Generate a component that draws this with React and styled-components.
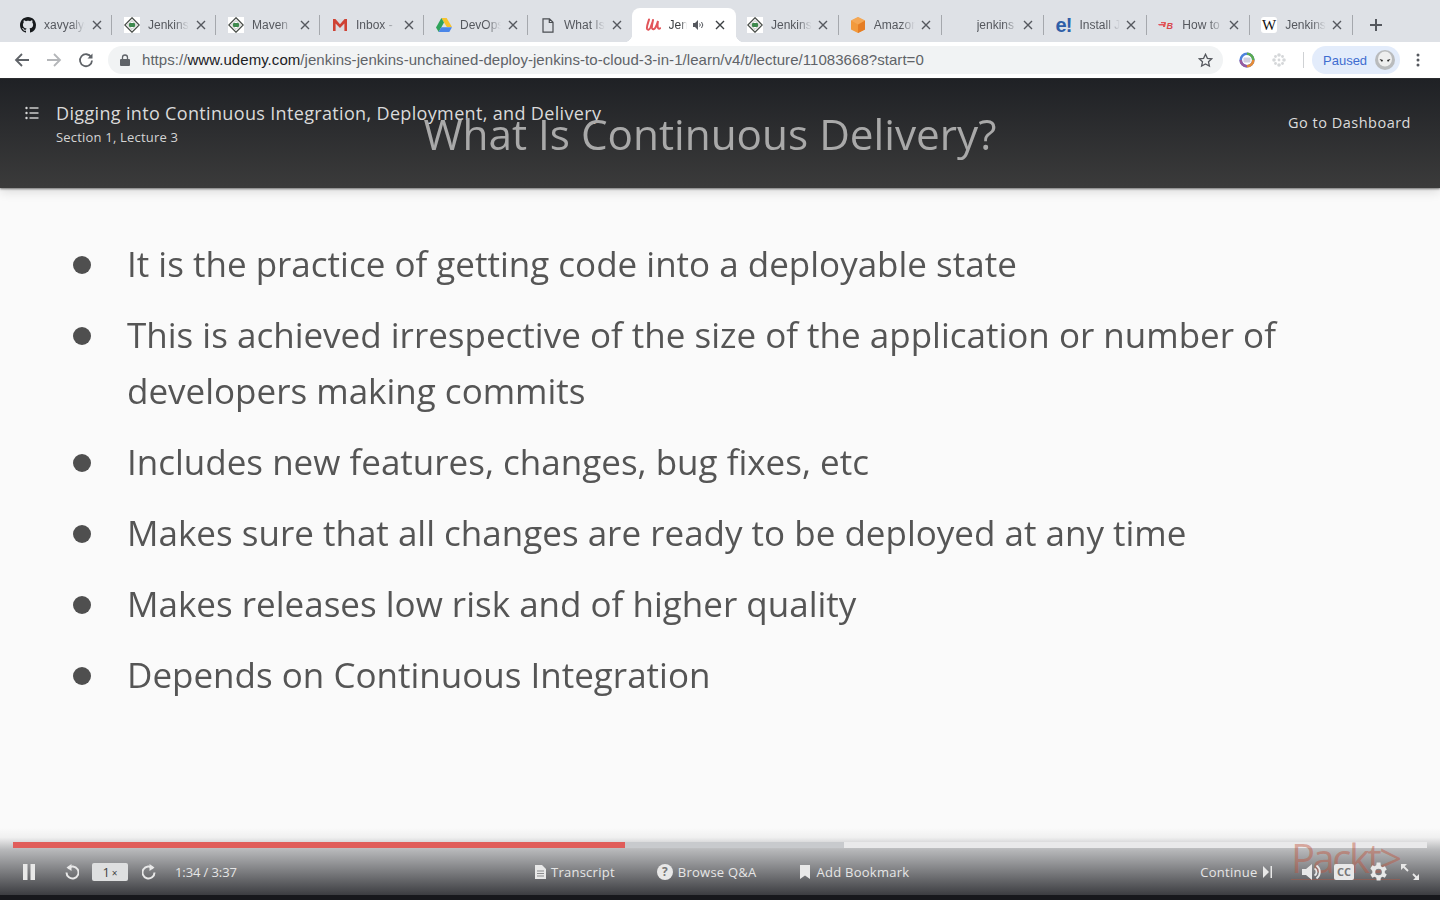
import React from "react";
import styled, { createGlobalStyle } from "styled-components";

const Global = createGlobalStyle`
  html, body { margin: 0; padding: 0; width: 1440px; height: 900px; overflow: hidden; background: #fafafa; }
  * { box-sizing: border-box; }
`;
const Page = styled.div`
  width: 1440px; height: 900px; display: flex; flex-direction: column;
  font-family: "Liberation Sans", Arial, sans-serif;
`;
const TabStrip = styled.div`
  height: 42px; flex: none; background: #dee1e6; padding: 8px 0 0 8px; display: flex; align-items: stretch;
`;
const Tab = styled.div`
  position: relative; width: ${p => p.$early ? 104 : 102.83}px; flex: none; display: flex; align-items: center; padding: 0 0 0 ${p => p.$active ? 12.5 : p.$early ? 12 : 11}px;
  height: 34px;
  ${p => p.$sep ? `&::after{content:"";position:absolute;right:0;top:7px;height:20px;width:1px;background:#a5a8ad;}` : ""}
  ${p => p.$active ? `
    background:#fff; border-radius:8px 8px 0 0;
    &::before, &::after { content:""; position:absolute; bottom:0; width:8px; height:8px; top:auto; }
    &::before { left:-8px; background: radial-gradient(circle at 0 0, transparent 8px, #fff 8.5px); }
    &::after { right:-8px; background: radial-gradient(circle at 100% 0, transparent 8px, #fff 8.5px); }
  ` : ""}
`;
const Fav = styled.span`
  width: 16px; height: 16px; flex: none; display: flex; align-items: center; justify-content: center;
`;
const TabTitle = styled.span`
  margin-left: 8px; width: ${p => p.$w || 41}px; flex: none; overflow: hidden; white-space: nowrap; font-size: 12px; color: ${p => p.$active ? "#3c4043" : "#55585e"};
  -webkit-mask-image: linear-gradient(90deg, #000 65%, transparent 100%);
  mask-image: linear-gradient(90deg, #000 65%, transparent 100%);
`;
const Close = styled.svg`
  width: 10px; height: 10px; position: absolute; right: ${p => p.$r}px; top: 12px;
`;
const Speaker = styled.svg` width: 12px; height: 12px; margin-left: 5px; flex: none; `;
const Plus = styled.svg` width: 14px; height: 14px; margin: 10px 0 0 16px; flex: none; `;
const Toolbar = styled.div`
  height: 36px; flex: none; background: #fff; display: flex; align-items: center; padding: 0 0 0 14px; border-bottom: 0;
`;
const NavBtn = styled.svg` width: 16px; height: 16px; flex: none; margin-right: ${p => p.$mr}px; `;
const Omni = styled.div`
  width: 1115px; height: 28px; margin-left: 14px; background: #f1f3f4; border-radius: 14px; display: flex; align-items: center; padding: 0 10px 0 12px; flex: none;
`;
const Lock = styled.svg` width: 10px; height: 12px; flex: none; `;
const Star = styled.svg` width: 15px; height: 15px; flex: none; `;
const Url = styled.div`
  flex: 1; margin-left: 12px; padding-bottom: 1px; font-size: 15px; letter-spacing: .05px; color: #5f6368; white-space: nowrap; overflow: hidden;
  b { font-weight: 400; color: #202124; }
`;
const ExtIcon = styled.svg` width: 16px; height: 16px; flex: none; margin-left: ${p => p.$ml}px; `;
const Divider = styled.span` width: 1px; height: 16px; background: #cfd1d4; margin-left: 16px; flex: none; `;
const Paused = styled.div`
  width: 88px; height: 28px; margin-left: 8px; border-radius: 14px; background: #e3ecfb; display: flex; align-items: center; padding-left: 11px; flex: none;
  font-size: 13px; color: #3f6cd0;
`;
const Avatar = styled.svg` width: 20px; height: 20px; margin-left: 8px; flex: none; `;
const Dots = styled.svg` width: 4px; height: 14px; margin-left: 16px; flex: none; `;
const Player = styled.div`
  flex: 1; position: relative; background: #fafafa; border-top: 1px solid #2b2c2f; overflow: hidden; font-family: "Open Sans", sans-serif; display: flex; flex-direction: column;
`;
const Header = styled.div`
  position: relative; height: 109px; flex: none; display: flex; justify-content: space-between; align-items: flex-start; padding: 24px 29px 0 25px;
  background: linear-gradient(180deg, #1f2125 0%, #3b3b3b 100%);
  box-shadow: 0 1px 2px rgba(0,0,0,.5), 0 4px 10px rgba(0,0,0,.12);
`;
const HeaderLeft = styled.div` display: flex; align-items: flex-start; `;
const ListIcon = styled.svg` width: 14px; height: 14px; margin: 3px 17px 0 0; flex: none; `;
const HTitle = styled.div` font-size: 18px; letter-spacing: .34px; line-height: 20px; color: #dadada; `;
const HSub = styled.div` font-size: 13px; letter-spacing: .2px; line-height: 18px; margin-top: 5px; color: #d4d4d4; `;
const Dash = styled.div` font-size: 14.5px; color: #dcdcdc; line-height: 20px; margin-top: 10px; letter-spacing: .5px; `;
const SlideTitle = styled.div`
  position: absolute; left: 0; width: 1420px; top: 26px; text-align: center; font-size: 42.3px; line-height: 58px; color: #a9a9a9; white-space: nowrap; filter: blur(.35px);
`;
const Bullets = styled.ul`
  list-style: none; margin: 0; padding: 48px 0 0 73px; display: flex; flex-direction: column; gap: 15px; filter: blur(.35px);
`;
const Bullet = styled.li`
  display: flex; align-items: flex-start; font-size: 35px; line-height: 56px; color: #555; width: 1260px;
  &::before { content: ""; width: 18px; height: 18px; border-radius: 50%; background: #4f4f4f; flex: none; margin: 20px 36px 0 0; }
`;
const Controls = styled.div`
  position: absolute; left: 0; right: 0; bottom: 0; height: 72px; padding: 14px 13px 0;
  background: linear-gradient(180deg, rgba(250,250,250,0) 0%, #f0f0f0 14%, #b8b9bb 32%, #3c3d41 100%);
  border-bottom: 5px solid #17181c; display: flex; flex-direction: column;
`;
const Progress = styled.div`
  height: 6px; flex: none; background: #e9e9ea; display: flex;
`;
const Played = styled.div` height: 100%; background: #e05d5a; `;
const Buffered = styled.div` height: 100%; background: #c8cacd; `;
const CtlRow = styled.div`
  flex: 1; display: flex; align-items: center; position: relative; z-index: 0; color: #e6e6e6; font-size: 13px;
`;
const CtlIcon = styled.svg`
  flex: none; margin-left: ${p => p.$ml || 0}px; display: block;
`;
const Speed = styled.div`
  width: 36px; height: 18px; margin-left: 13px; background: #dedfe0; border-radius: 2px; color: #444; font-size: 13px; line-height: 18px; text-align: center; flex: none;
  span { font-size: 10px; margin-left: 2px; }
`;
const Time = styled.div` margin-left: 19px; width: 66px; flex: none; white-space: nowrap; letter-spacing: -.1px; `;
const Action = styled.div`
  display: flex; align-items: center; gap: ${p => p.$gap}px; margin-left: ${p => p.$ml}px; flex: none; white-space: nowrap; letter-spacing: .25px;
`;
const Logo = styled.div`
  position: absolute; z-index: -1; left: 1278px; top: -12px; font-size: 40px; line-height: 43px; color: rgba(190,84,60,.45); letter-spacing: -2.5px; white-space: nowrap; border-bottom: 1px solid rgba(190,84,60,.4);
`;

const Jenkins = () => (
  <svg width="16" height="16" viewBox="0 0 16 16">
    <rect width="16" height="16" fill="#fff" />
    <path d="M8 .8L15.2 8 8 15.2.8 8z" fill="#fff" stroke="#4a4f4a" strokeWidth="1.3" />
    <path d="M8 3.6L12.4 8 8 12.4 3.6 8z" fill="#fff" stroke="#8a8f8a" strokeWidth=".6" />
    <rect x="5" y="6" width="6" height="4" rx="1" fill="#3f8a4e" />
  </svg>
);
const EMark = styled.span` font: 700 20px/16px "Liberation Sans", sans-serif; color: #2f5fa8; letter-spacing: -1px; `;
const WMark = styled.span` width: 16px; height: 16px; background: #fff; border-radius: 3px; font: 400 15px/16px "Liberation Serif", serif; color: #111; text-align: center; `;
const favicons = {
  github: (
    <svg width="16" height="16" viewBox="0 0 16 16"><path fill="#171a1d" d="M8 0C3.58 0 0 3.58 0 8c0 3.54 2.29 6.53 5.47 7.59.4.07.55-.17.55-.38 0-.19-.01-.82-.01-1.49-2.01.37-2.53-.49-2.69-.94-.09-.23-.48-.94-.82-1.13-.28-.15-.68-.52-.01-.53.63-.01 1.08.58 1.23.82.72 1.21 1.87.87 2.33.66.07-.52.28-.87.51-1.07-1.78-.2-3.64-.89-3.64-3.95 0-.87.31-1.59.82-2.15-.08-.2-.36-1.02.08-2.12 0 0 .67-.21 2.2.82.64-.18 1.32-.27 2-.27s1.36.09 2 .27c1.53-1.04 2.2-.82 2.2-.82.44 1.1.16 1.92.08 2.12.51.56.82 1.27.82 2.15 0 3.07-1.87 3.75-3.65 3.95.29.25.54.73.54 1.48 0 1.07-.01 1.93-.01 2.2 0 .21.15.46.55.38A8.01 8.01 0 0016 8c0-4.42-3.58-8-8-8z" /></svg>
  ),
  jenkins: <Jenkins />,
  gmail: (
    <svg width="16" height="14" viewBox="0 0 16 14"><path fill="#d3d3d3" d="M2 1h12v12H2z" opacity=".35" /><path fill="#cf4234" d="M1 1h2.4L8 6.2 12.6 1H15v12h-2.6V5.4L8 10 3.6 5.4V13H1z" /></svg>
  ),
  drive: (
    <svg width="16" height="14" viewBox="0 0 16 14"><path fill="#f7c32e" d="M5.4 0h5.2l5.4 9h-5.2z" /><path fill="#2fa35a" d="M5.4 0L8 4.5 2.7 14 0 9.4z" /><path fill="#4a86e8" d="M5.2 9.2H16L13.3 14H2.6z" /></svg>
  ),
  doc: (
    <svg width="12" height="15" viewBox="0 0 12 15"><path fill="none" stroke="#4a4d52" strokeWidth="1.2" d="M1 .8h6.5L11 4.3v9.9H1zM7.3.8v3.7H11" /></svg>
  ),
  udemy: (
    <svg width="16" height="14" viewBox="0 0 16 14"><path fill="none" stroke="#e2555a" strokeWidth="2" strokeLinecap="round" d="M4 1.500C3.500 4 1.500 8 2 10.500c.5 2 2.500 1.500 3.500-1L7.500 4M8 2c-.5 3-1.500 6-1 8 .5 1.800 2.500 1.500 3.500-.5C11.800 7 12.500 5 13 3c-.5 2.500-.8 5 0 7 .4 1 1.500 1 2.200.2" /></svg>
  ),
  box: (
    <svg width="16" height="16" viewBox="0 0 16 16"><path fill="#f29a3c" d="M8 0l7 3.600v8.800L8 16 1 12.400V3.600z" /><path fill="#e57d24" d="M8 7.500V16l7-3.600V3.600z" /><path fill="#f7b267" d="M1 3.600L8 0l7 3.600L8 7.500z" opacity=".55" /></svg>
  ),
  e: <EMark>e!</EMark>,
  b: (
    <svg width="16" height="10" viewBox="0 0 16 10"><path fill="#e2555a" d="M0 4h6V3h2L7 7H5V5.500H1zM3 2h5L7.500 3.200H3z" /><text x="8.500" y="8.500" fontSize="9" fontWeight="700" fontStyle="italic" fill="#d9474d" fontFamily="Liberation Sans">B</text></svg>
  ),
  w: <WMark>W</WMark>,
};
const tabs = [
  ["github", "xavyalyst"], ["jenkins", "Jenkins"], ["jenkins", "Maven"], ["gmail", "Inbox - "], ["drive", "DevOps"],
  ["doc", "What Is"], ["udemy", "Jenkins", true], ["jenkins", "Jenkins"], ["box", "Amazon"], [null, "jenkins"],
  ["e", "Install J"], ["b", "How to"], ["w", "Jenkins"],
];

const Chip = () => (
  <ExtIcon $ml={16} viewBox="0 0 16 16">
    <circle cx="8" cy="8" r="6.300" fill="none" stroke="#4d82dc" strokeWidth="2.600" />
    <path d="M8 1.700A6.300 6.300 0 0114.300 8" fill="none" stroke="#5cab4e" strokeWidth="2.600" />
    <path d="M14.300 8A6.300 6.300 0 018 14.300" fill="none" stroke="#e68b35" strokeWidth="2.600" />
    <path d="M8 14.300A6.300 6.300 0 011.700 8" fill="none" stroke="#9a5b9e" strokeWidth="2.600" />
    <rect x="4.500" y="5.500" width="7" height="5" rx="1" fill="#cfcfe0" />
  </ExtIcon>
);

export default function App() {
  return (
    <Page>
      <Global />
      <TabStrip>
        {tabs.map(([f, t, active], i) => (
          <Tab key={i} $early={i < 7} $active={active} $sep={!active && i !== 5} >
            <Fav>{f && favicons[f]}</Fav>
            <TabTitle $active={active} $w={active ? 18 : 41}>{t}</TabTitle>
            {active && (
              <Speaker viewBox="0 0 12 12">
                <path fill="#55585e" d="M1 4h2l3-3v10L3 8H1z" /><path d="M7.500 4.500a2 2 0 010 3M9.500 3a4.500 4.500 0 010 6" fill="none" stroke="#55585e" />
              </Speaker>
            )}
            <Close $r={i < 6 ? 10 : 11} viewBox="0 0 10 10"><path d="M1 1l8 8M9 1l-8 8" stroke={active ? "#3c4043" : "#55585e"} strokeWidth="1.4" /></Close>
          </Tab>
        ))}
        <Plus viewBox="0 0 14 14"><path d="M7 1v12M1 7h12" stroke="#55585e" strokeWidth="2" /></Plus>
      </TabStrip>
      <Toolbar>
        <NavBtn $mr={16} viewBox="0 0 16 16"><path d="M15 8H2M8 2L2 8l6 6" fill="none" stroke="#5f6368" strokeWidth="1.800" /></NavBtn>
        <NavBtn $mr={16} viewBox="0 0 16 16"><path d="M1 8h13M8 2l6 6-6 6" fill="none" stroke="#b4b6b9" strokeWidth="1.800" /></NavBtn>
        <NavBtn $mr={0} viewBox="0 0 16 16"><path d="M13.200 5.200A6 6 0 1014 8.500" fill="none" stroke="#5f6368" strokeWidth="1.800" /><path d="M14.500 1.500v5h-5z" fill="#5f6368" /></NavBtn>
        <Omni>
          <Lock viewBox="0 0 10 12"><rect y="5" width="10" height="7" rx="1" fill="#5f6368" /><path d="M2.500 5V3.500a2.500 2.500 0 015 0V5" fill="none" stroke="#5f6368" strokeWidth="1.300" /></Lock>
          <Url><span>https://</span><b>www.udemy.com</b><span>/jenkins-jenkins-unchained-deploy-jenkins-to-cloud-3-in-1/learn/v4/t/lecture/11083668?start=0</span></Url>
          <Star viewBox="0 0 15 15"><path d="M7.500 1.300l1.900 4 4.300.5-3.200 3 .9 4.300-3.900-2.200-3.900 2.200.9-4.300-3.200-3 4.300-.5z" fill="none" stroke="#55585e" strokeWidth="1.300" /></Star>
        </Omni>
        <Chip />
        <ExtIcon $ml={16} viewBox="0 0 16 16">
          <g fill="#d5d7d9"><circle cx="8" cy="3" r="1.800" /><circle cx="8" cy="13" r="1.800" /><circle cx="3" cy="8" r="1.800" /><circle cx="13" cy="8" r="1.800" /><circle cx="4.500" cy="4.500" r="1.400" /><circle cx="11.500" cy="4.500" r="1.400" /><circle cx="4.500" cy="11.500" r="1.400" /><circle cx="11.500" cy="11.500" r="1.400" /><circle cx="8" cy="8" r="1.400" /></g>
        </ExtIcon>
        <Divider />
        <Paused>Paused
          <Avatar viewBox="0 0 20 20"><circle cx="10" cy="10" r="10" fill="#b9bbbd" /><ellipse cx="10" cy="9" rx="7" ry="7.500" fill="#eeeeee" /><path d="M4.500 9l3.500 1-1 2zM15.500 9L12 10l1 2z" fill="#222" /></Avatar>
        </Paused>
        <Dots viewBox="0 0 4 14"><g fill="#55585e"><circle cx="2" cy="2" r="1.500" /><circle cx="2" cy="7" r="1.500" /><circle cx="2" cy="12" r="1.500" /></g></Dots>
      </Toolbar>
      <Player>
        <Header>
          <HeaderLeft>
            <ListIcon viewBox="0 0 14 14"><g fill="#d8d8d8"><circle cx="1.500" cy="2" r="1.200" /><circle cx="1.500" cy="7" r="1.200" /><circle cx="1.500" cy="12" r="1.200" /><rect x="4.500" y="1.300" width="9" height="1.400" /><rect x="4.500" y="6.300" width="9" height="1.400" /><rect x="4.500" y="11.300" width="9" height="1.400" /></g></ListIcon>
            <div>
              <HTitle>Digging into Continuous Integration, Deployment, and Delivery</HTitle>
              <HSub>Section 1, Lecture 3</HSub>
            </div>
          </HeaderLeft>
          <Dash>Go to Dashboard</Dash>
          <SlideTitle>What Is Continuous Delivery?</SlideTitle>
        </Header>
        <Bullets>
          <Bullet>It is the practice of getting code into a deployable state</Bullet>
          <Bullet>This is achieved irrespective of the size of the application or number of developers making commits</Bullet>
          <Bullet>Includes new features, changes, bug fixes, etc</Bullet>
          <Bullet>Makes sure that all changes are ready to be deployed at any time</Bullet>
          <Bullet>Makes releases low risk and of higher quality</Bullet>
          <Bullet>Depends on Continuous Integration</Bullet>
        </Bullets>
        <Controls>
          <Progress>
            <Played style={{ width: 612 }} />
            <Buffered style={{ width: 219 }} />
          </Progress>
          <CtlRow>
            <Logo>Packt&gt;</Logo>
            <CtlIcon $ml={10} width="12" height="16" viewBox="0 0 12 16"><path fill="#e8e8e8" d="M0 0h4.500v16H0zM7.500 0H12v16H7.500z" /></CtlIcon>
            <CtlIcon $ml={30} width="14" height="16" viewBox="0 0 14 16"><path d="M3 4.500a6 6 0 11-1.500 4" fill="none" stroke="#e8e8e8" strokeWidth="2" /><path fill="#e8e8e8" d="M6.500 0v7L1.500 3.500z" /></CtlIcon>
            <Speed>1<span>×</span></Speed>
            <CtlIcon $ml={14} width="14" height="16" viewBox="0 0 14 16"><path d="M11 4.500a6 6 0 101.500 4" fill="none" stroke="#e8e8e8" strokeWidth="2" /><path fill="#e8e8e8" d="M7.500 0v7l5-3.500z" /></CtlIcon>
            <Time>1:34 / 3:37</Time>
            <Action $ml={294} $gap={5}>
              <svg width="11" height="14" viewBox="0 0 11 14"><path fill="#e8e8e8" d="M0 0h7l4 4v10H0z" /><path d="M2 6h7M2 8.500h7M2 11h7" stroke="#8a8b8d" /></svg>
              Transcript
            </Action>
            <Action $ml={42} $gap={5}>
              <svg width="16" height="16" viewBox="0 0 16 16"><circle cx="8" cy="8" r="8" fill="#e8e8e8" /><text x="8" y="12" textAnchor="middle" fontSize="12" fontWeight="700" fill="#777" fontFamily="Open Sans">?</text></svg>
              Browse Q&amp;A
            </Action>
            <Action $ml={43} $gap={7}>
              <svg width="10" height="14" viewBox="0 0 10 14"><path fill="#e8e8e8" d="M0 0h10v14L5 10.500 0 14z" /></svg>
              Add Bookmark
            </Action>
            <Action $ml={291} $gap={5}>
              Continue
              <svg width="9" height="12" viewBox="0 0 9 12"><path fill="#e8e8e8" d="M0 0l6 6-6 6z" /><rect x="7.500" width="1.500" height="12" fill="#e8e8e8" /></svg>
            </Action>
            <CtlIcon $ml={30} width="20" height="16" viewBox="0 0 20 16"><path fill="#e8e8e8" d="M0 5h4l6-5v16l-6-5H0z" /><path d="M12.500 4.500a4 4 0 010 7M14.500 1.500a8 8 0 010 13" fill="none" stroke="#e8e8e8" strokeWidth="1.800" /></CtlIcon>
            <CtlIcon $ml={12.5} width="20" height="16" viewBox="0 0 20 16"><rect width="20" height="16" rx="2" fill="#e8e8e8" /><text x="10" y="12" textAnchor="middle" fontSize="11" fontWeight="700" fill="#777" fontFamily="Open Sans">CC</text></CtlIcon>
            <CtlIcon $ml={14} width="20" height="20" viewBox="3.500 1.500 20 21"><path fill="#e8e8e8" fillRule="evenodd" d="M20.600 13c.1-.3.1-.7.100-1s0-.7-.1-1l2.100-1.600-2-3.500-2.500 1c-.5-.4-1.100-.7-1.700-1L16.100 2h-4l-.4 2.900c-.6.300-1.200.6-1.700 1l-2.500-1-2 3.500L7.600 11c-.1.300-.1.700-.1 1s0 .7.100 1l-2.100 1.600 2 3.500 2.500-1c.5.400 1.100.7 1.700 1l.4 2.900h4l.4-2.900c.6-.3 1.200-.6 1.700-1l2.500 1 2-3.500zM14.100 15.500a3.500 3.500 0 110-7 3.500 3.500 0 010 7z" /></CtlIcon>
            <CtlIcon $ml={12} width="20" height="18" viewBox="0 0 20 18"><path d="M2 2l6 6M13 11l5 5" stroke="#e8e8e8" strokeWidth="1.800" /><path fill="#e8e8e8" d="M1 1h6L1 7zM19 17h-6l6-6z" /></CtlIcon>
          </CtlRow>
        </Controls>
      </Player>
    </Page>
  );
}
